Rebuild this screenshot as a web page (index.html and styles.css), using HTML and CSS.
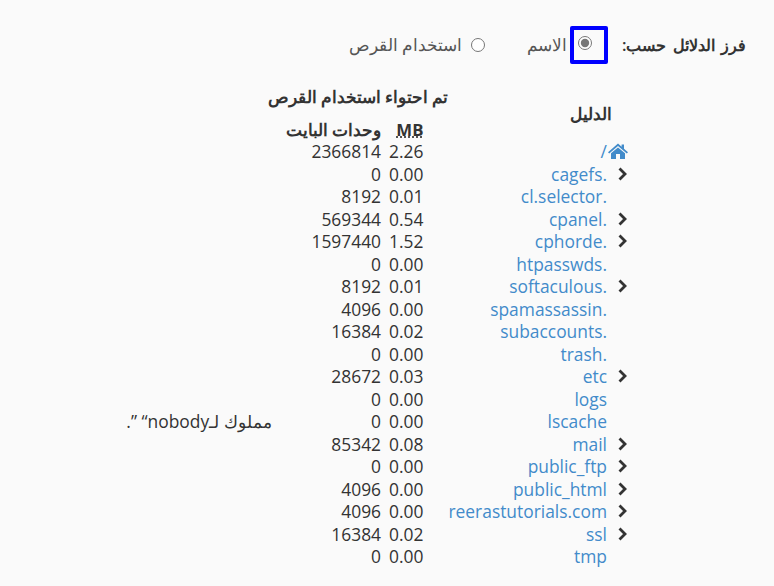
FILE: index.html
```html
<!DOCTYPE html>
<html lang="ar" dir="rtl">
<head>
    <meta charset="UTF-8">
    <title>استخدام القرص</title>
    <link rel="stylesheet" href="styles.css">
</head>
<body>
<form class="sort">
    <strong class="sort-label">فرز الدلائل حسب:</strong>
    <label class="sort-option">
        <span class="focus-box"><input type="radio" name="sort" checked></span>
        الاسم
    </label>
    <label class="sort-option">
        <span class="plain-box"><input type="radio" name="sort"></span>
        استخدام القرص
    </label>
</form>
<table class="usage">
    <thead>
        <tr>
            <th class="name-head" colspan="2" rowspan="2">الدليل</th>
            <th class="group" colspan="2"><div class="group-title">تم احتواء استخدام القرص</div></th>
            <th class="note" rowspan="2"></th>
        </tr>
        <tr>
            <th class="mb"><abbr title="Megabytes">MB</abbr></th>
            <th class="bytes">وحدات البايت</th>
        </tr>
    </thead>
    <tbody>
        <tr>
            <td class="toggle"><svg class="home" viewBox="0 0 20 16"><path d="M10 0.6 L13.6 3.7 V1.4 H16 V5.8 L20 9.2 L18.8 10.5 L10 3 L1.2 10.5 L0 9.2 Z"/><path d="M10 4.4 L17 10.3 V16 H12 V11 H8 V16 H3 V10.3 Z"/></svg></td>
            <td class="name"><a href="#">/</a></td><td class="mb">2.26</td><td class="bytes">2366814</td><td class="note"></td>
        </tr>
        <tr>
            <td class="toggle"><svg class="chevron" viewBox="0 0 10 14"><path d="M2.5 1.5 L8 7 L2.5 12.5"/></svg></td>
            <td class="name"><a href="#">.cagefs</a></td><td class="mb">0.00</td><td class="bytes">0</td><td class="note"></td>
        </tr>
        <tr>
            <td class="toggle"></td>
            <td class="name"><a href="#">.cl.selector</a></td><td class="mb">0.01</td><td class="bytes">8192</td><td class="note"></td>
        </tr>
        <tr>
            <td class="toggle"><svg class="chevron" viewBox="0 0 10 14"><path d="M2.5 1.5 L8 7 L2.5 12.5"/></svg></td>
            <td class="name"><a href="#">.cpanel</a></td><td class="mb">0.54</td><td class="bytes">569344</td><td class="note"></td>
        </tr>
        <tr>
            <td class="toggle"><svg class="chevron" viewBox="0 0 10 14"><path d="M2.5 1.5 L8 7 L2.5 12.5"/></svg></td>
            <td class="name"><a href="#">.cphorde</a></td><td class="mb">1.52</td><td class="bytes">1597440</td><td class="note"></td>
        </tr>
        <tr>
            <td class="toggle"></td>
            <td class="name"><a href="#">.htpasswds</a></td><td class="mb">0.00</td><td class="bytes">0</td><td class="note"></td>
        </tr>
        <tr>
            <td class="toggle"><svg class="chevron" viewBox="0 0 10 14"><path d="M2.5 1.5 L8 7 L2.5 12.5"/></svg></td>
            <td class="name"><a href="#">.softaculous</a></td><td class="mb">0.01</td><td class="bytes">8192</td><td class="note"></td>
        </tr>
        <tr>
            <td class="toggle"></td>
            <td class="name"><a href="#">.spamassassin</a></td><td class="mb">0.00</td><td class="bytes">4096</td><td class="note"></td>
        </tr>
        <tr>
            <td class="toggle"></td>
            <td class="name"><a href="#">.subaccounts</a></td><td class="mb">0.02</td><td class="bytes">16384</td><td class="note"></td>
        </tr>
        <tr>
            <td class="toggle"></td>
            <td class="name"><a href="#">.trash</a></td><td class="mb">0.00</td><td class="bytes">0</td><td class="note"></td>
        </tr>
        <tr>
            <td class="toggle"><svg class="chevron" viewBox="0 0 10 14"><path d="M2.5 1.5 L8 7 L2.5 12.5"/></svg></td>
            <td class="name"><a href="#">etc</a></td><td class="mb">0.03</td><td class="bytes">28672</td><td class="note"></td>
        </tr>
        <tr>
            <td class="toggle"></td>
            <td class="name"><a href="#">logs</a></td><td class="mb">0.00</td><td class="bytes">0</td><td class="note"></td>
        </tr>
        <tr>
            <td class="toggle"></td>
            <td class="name"><a href="#">lscache</a></td><td class="mb">0.00</td><td class="bytes">0</td><td class="note">مملوك لـnobody“ ”.</td>
        </tr>
        <tr>
            <td class="toggle"><svg class="chevron" viewBox="0 0 10 14"><path d="M2.5 1.5 L8 7 L2.5 12.5"/></svg></td>
            <td class="name"><a href="#">mail</a></td><td class="mb">0.08</td><td class="bytes">85342</td><td class="note"></td>
        </tr>
        <tr>
            <td class="toggle"><svg class="chevron" viewBox="0 0 10 14"><path d="M2.5 1.5 L8 7 L2.5 12.5"/></svg></td>
            <td class="name"><a href="#">public_ftp</a></td><td class="mb">0.00</td><td class="bytes">0</td><td class="note"></td>
        </tr>
        <tr>
            <td class="toggle"><svg class="chevron" viewBox="0 0 10 14"><path d="M2.5 1.5 L8 7 L2.5 12.5"/></svg></td>
            <td class="name"><a href="#">public_html</a></td><td class="mb">0.00</td><td class="bytes">4096</td><td class="note"></td>
        </tr>
        <tr>
            <td class="toggle"><svg class="chevron" viewBox="0 0 10 14"><path d="M2.5 1.5 L8 7 L2.5 12.5"/></svg></td>
            <td class="name"><a href="#">reerastutorials.com</a></td><td class="mb">0.00</td><td class="bytes">4096</td><td class="note"></td>
        </tr>
        <tr>
            <td class="toggle"><svg class="chevron" viewBox="0 0 10 14"><path d="M2.5 1.5 L8 7 L2.5 12.5"/></svg></td>
            <td class="name"><a href="#">ssl</a></td><td class="mb">0.02</td><td class="bytes">16384</td><td class="note"></td>
        </tr>
        <tr>
            <td class="toggle"></td>
            <td class="name"><a href="#">tmp</a></td><td class="mb">0.00</td><td class="bytes">0</td><td class="note"></td>
        </tr>
    </tbody>
</table>
</body>
</html>
```

FILE: styles.css
```css
html {
    background-color: #fafafa;
}
body {
    margin: 0;
    padding: 26px 28px 0 0;
    color: #333;
    font-family: "Open Sans", "Noto Sans", sans-serif;
    font-size: 16.8px;
    line-height: 22.5px;
}
.sort {
    display: flex;
    align-items: center;
    height: 38px;
}
.sort-label {
    width: 124px;
    font-size: 16.4px;
    font-weight: 600;
    word-spacing: 2px;
    margin-left: 14px;
    white-space: nowrap;
    color: #333;
}
.sort-option {
    display: flex;
    align-items: center;
    color: #555;
}
.sort-option + .sort-option {
    margin-right: 42px;
}
.focus-box {
    display: flex;
    align-items: center;
    box-sizing: border-box;
    width: 38px;
    height: 38px;
    padding: 0 12px 4px 0;
    margin-left: 3px;
    border: 4px solid #0000ff;
    border-radius: 2px;
}
.plain-box {
    display: flex;
    margin-left: 9px;
}
input[type="radio"] {
    width: 14px;
    height: 14px;
    margin: 0;
    accent-color: #777;
}
.usage {
    border-collapse: collapse;
    margin: 22px 116px 0 0;
    font-size: 17.4px;
}
.usage th, .usage td {
    padding: 0;
    text-align: right;
    white-space: nowrap;
}
.usage th {
    font-size: 16.8px;
    font-weight: 600;
    color: #333;
    line-height: 20.5px;
}
.usage .name-head {
    padding: 3px 18px 0 0;
    vertical-align: middle;
}
.usage .group {
    padding-bottom: 11px;
    font-size: 16.5px;
    line-height: 22.5px;
}
.group-title {
    width: 170px;
}
.toggle {
    width: 23px;
    min-width: 23px;
}
.usage .mb {
    padding: 0 25px 0 8px;
}
.usage .bytes {
    padding-left: 14px;
}
.note {
    width: 146px;
}
.name a {
    color: #428bca;
    text-decoration: none;
}
abbr {
    font-weight: 700;
    text-decoration: underline dotted;
}
.home {
    display: block;
    width: 20px;
    height: 16px;
    margin-right: 2px;
    fill: #428bca;
}
.chevron {
    display: block;
    width: 10px;
    height: 14px;
    margin-right: 3px;
    fill: none;
    stroke: #333;
    stroke-width: 2.8;
}
```
